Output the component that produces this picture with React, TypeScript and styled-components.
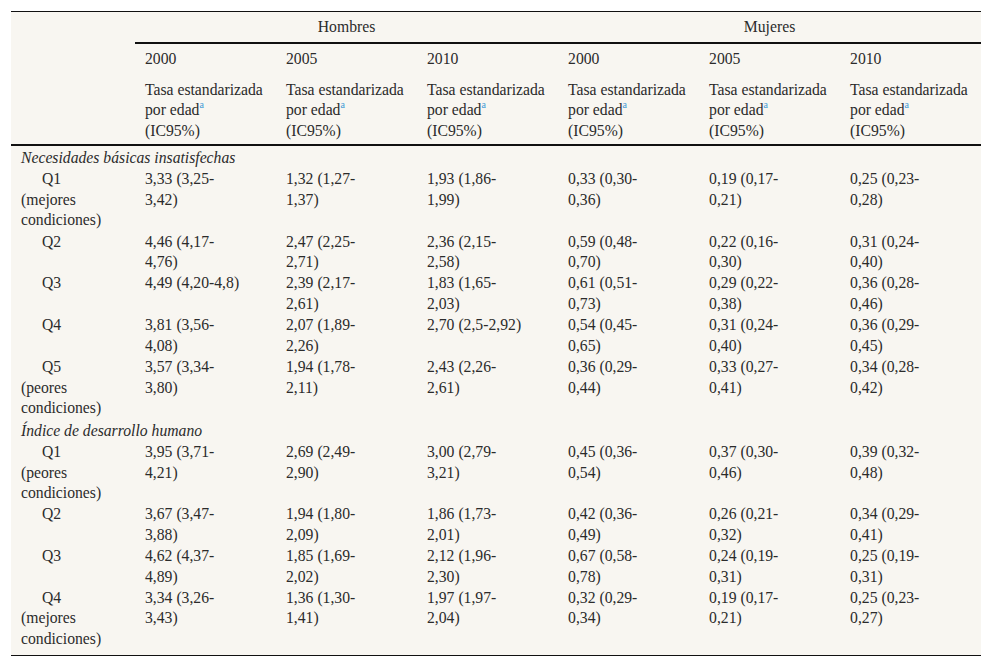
import React from 'react'
import styled, { createGlobalStyle } from 'styled-components'

const GlobalStyle = createGlobalStyle`
    body {
        margin: 0;
        background: #ffffff;
        font-family: "Liberation Serif", "Times New Roman", serif;
        color: #2b2b2b;
    }
`

interface Row {
    quint: string
    note?: string
    values: string[]
}

interface Section {
    title: string
    rows: Row[]
}

const years = ['2000', '2005', '2010', '2000', '2005', '2010']

const sections: Section[] = [
    {
        title: 'Necesidades básicas insatisfechas',
        rows: [
            { quint: 'Q1', note: '(mejores condiciones)', values: ['3,33 (3,25-3,42)', '1,32 (1,27-1,37)', '1,93 (1,86-1,99)', '0,33 (0,30-0,36)', '0,19 (0,17-0,21)', '0,25 (0,23-0,28)'] },
            { quint: 'Q2', values: ['4,46 (4,17-4,76)', '2,47 (2,25-2,71)', '2,36 (2,15-2,58)', '0,59 (0,48-0,70)', '0,22 (0,16-0,30)', '0,31 (0,24-0,40)'] },
            { quint: 'Q3', values: ['4,49 (4,20-4,8)', '2,39 (2,17-2,61)', '1,83 (1,65-2,03)', '0,61 (0,51-0,73)', '0,29 (0,22-0,38)', '0,36 (0,28-0,46)'] },
            { quint: 'Q4', values: ['3,81 (3,56-4,08)', '2,07 (1,89-2,26)', '2,70 (2,5-2,92)', '0,54 (0,45-0,65)', '0,31 (0,24-0,40)', '0,36 (0,29-0,45)'] },
            { quint: 'Q5', note: '(peores condiciones)', values: ['3,57 (3,34-3,80)', '1,94 (1,78-2,11)', '2,43 (2,26-2,61)', '0,36 (0,29-0,44)', '0,33 (0,27-0,41)', '0,34 (0,28-0,42)'] },
        ],
    },
    {
        title: 'Índice de desarrollo humano',
        rows: [
            { quint: 'Q1', note: '(peores condiciones)', values: ['3,95 (3,71-4,21)', '2,69 (2,49-2,90)', '3,00 (2,79-3,21)', '0,45 (0,36-0,54)', '0,37 (0,30-0,46)', '0,39 (0,32-0,48)'] },
            { quint: 'Q2', values: ['3,67 (3,47-3,88)', '1,94 (1,80-2,09)', '1,86 (1,73-2,01)', '0,42 (0,36-0,49)', '0,26 (0,21-0,32)', '0,34 (0,29-0,41)'] },
            { quint: 'Q3', values: ['4,62 (4,37-4,89)', '1,85 (1,69-2,02)', '2,12 (1,96-2,30)', '0,67 (0,58-0,78)', '0,24 (0,19-0,31)', '0,25 (0,19-0,31)'] },
            { quint: 'Q4', note: '(mejores condiciones)', values: ['3,34 (3,26-3,43)', '1,36 (1,30-1,41)', '1,97 (1,97-2,04)', '0,32 (0,29-0,34)', '0,19 (0,17-0,21)', '0,25 (0,23-0,27)'] },
        ],
    },
]

export default function App() {
    return (
        <>
            <GlobalStyle />
            <Page>
                <Table>
                    <colgroup>
                        <col style={{ width: 124 }} />
                        {years.map((_, i) => <col key={i} style={{ width: 141 }} />)}
                    </colgroup>
                    <thead>
                        <tr>
                            <HeadCell rowSpan={3} />
                            <GroupCell colSpan={3}>Hombres</GroupCell>
                            <GroupCell colSpan={3}>Mujeres</GroupCell>
                        </tr>
                        <tr>
                            {years.map((y, i) => <HeadCell key={i}>{y}</HeadCell>)}
                        </tr>
                        <tr>
                            {years.map((_, i) => (
                                <HeadCell key={i} $last>
                                    Tasa estandarizada por edad<Sup>a</Sup>
                                    <br />
                                    (IC95%)
                                </HeadCell>
                            ))}
                        </tr>
                    </thead>
                    <tbody>
                        {sections.map((s) => (
                            <React.Fragment key={s.title}>
                                <tr>
                                    <SectionCell colSpan={7}>{s.title}</SectionCell>
                                </tr>
                                {s.rows.map((r) => (
                                    <BodyRow key={s.title + r.quint}>
                                        <LabelCell>
                                            <Quint>{r.quint}</Quint>
                                            {r.note}
                                        </LabelCell>
                                        {r.values.map((v, i) => (
                                            <Cell key={i}>
                                                <Value>{v}</Value>
                                            </Cell>
                                        ))}
                                    </BodyRow>
                                ))}
                            </React.Fragment>
                        ))}
                    </tbody>
                </Table>
            </Page>
        </>
    )
}

const Page = styled.div`
    padding: 11px 11px;
`

const Table = styled.table`
    width: 970px;
    table-layout: fixed;
    border-collapse: collapse;
    background: #f8f6f1;
    border-top: 1px solid #111;
    border-bottom: 1px solid #111;
    font-size: 15.7px;
    line-height: 20.4px;

    thead {
        border-bottom: 2px solid #111;
    }
`

const HeadCell = styled.th<{ $last?: boolean }>`
    font-weight: normal;
    text-align: left;
    vertical-align: top;
    padding: 5px 10px ${({ $last }) => ($last ? '3px' : '5px')};
`

const GroupCell = styled.th`
    font-weight: normal;
    text-align: center;
    padding: 5px 10px;
    border-bottom: 2px solid #111;
`

const Sup = styled.sup`
    color: #3d9ad6;
    font-size: 10px;
    line-height: 0;
    vertical-align: 7px;
`

const SectionCell = styled.td`
    font-style: italic;
    padding: 2px 10px 0.5px;
`

const BodyRow = styled.tr`
    &:last-child td {
        padding-bottom: 6px;
    }
`

const LabelCell = styled.td`
    vertical-align: top;
    padding: 0.5px 10px;
`

const Quint = styled.span`
    display: block;
    padding-left: 21px;
`

const Cell = styled.td`
    vertical-align: top;
    padding: 0.5px 10px;
`

const Value = styled.div`
    max-width: 98px;
`
